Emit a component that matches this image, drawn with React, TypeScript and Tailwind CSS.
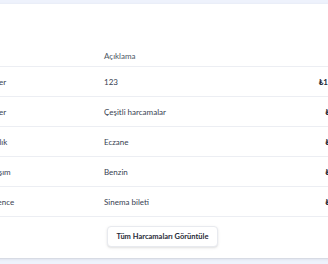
const expenses = [
  { category: 'Diğer', description: '123', amount: '₺1.250,00' },
  { category: 'Diğer', description: 'Çeşitli harcamalar', amount: '₺450,00' },
  { category: 'Sağlık', description: 'Eczane', amount: '₺120,00' },
  { category: 'Ulaşım', description: 'Benzin', amount: '₺350,00' },
  { category: 'Eğlence', description: 'Sinema bileti', amount: '₺180,00' },
];

export default function App() {
  return (
    <div
      className="min-h-screen overflow-hidden bg-[#eef2fc] pt-1"
      style={{ fontFamily: 'Lato, "Noto Sans", sans-serif' }}
    >
      {/* Recent expenses card */}
      <div className="-ml-[40px] w-[405px] bg-white pt-[41px] pb-[11px] shadow-sm">
        <div className="grid grid-cols-[136px_1fr_auto] text-[8px] text-[#374151]">
          <div className="flex h-[22px] items-center border-b border-[#eceef3] pl-[27px] text-[#4b5563]">
            Tür
          </div>
          <div className="flex h-[22px] items-center border-b border-[#eceef3] pl-2 text-[#4b5563]">
            Açıklama
          </div>
          <div className="flex h-[22px] items-center justify-end border-b border-[#eceef3] pr-[10px] text-[#4b5563]">
            Tutar
          </div>

          {expenses.map((e, i) => (
            <div key={i} className="contents">
              <div className="flex h-[30px] items-center border-b border-[#eceef3] pl-[27px]">
                {e.category}
              </div>
              <div className="flex h-[30px] items-center border-b border-[#eceef3] pl-2">
                {e.description}
              </div>
              <div className="flex h-[30px] items-center justify-end border-b border-[#eceef3] pr-[10px] font-bold text-[#1f2937]">
                {e.amount}
              </div>
            </div>
          ))}
        </div>

        <div className="flex justify-center pt-[9px]">
          <button className="h-[21px] rounded-[4px] border border-[#e8eaef] bg-white px-[9px] text-[7.5px] font-bold text-[#1f2937] shadow-sm">
            Tüm Harcamaları Görüntüle
          </button>
        </div>
      </div>
    </div>
  );
}
